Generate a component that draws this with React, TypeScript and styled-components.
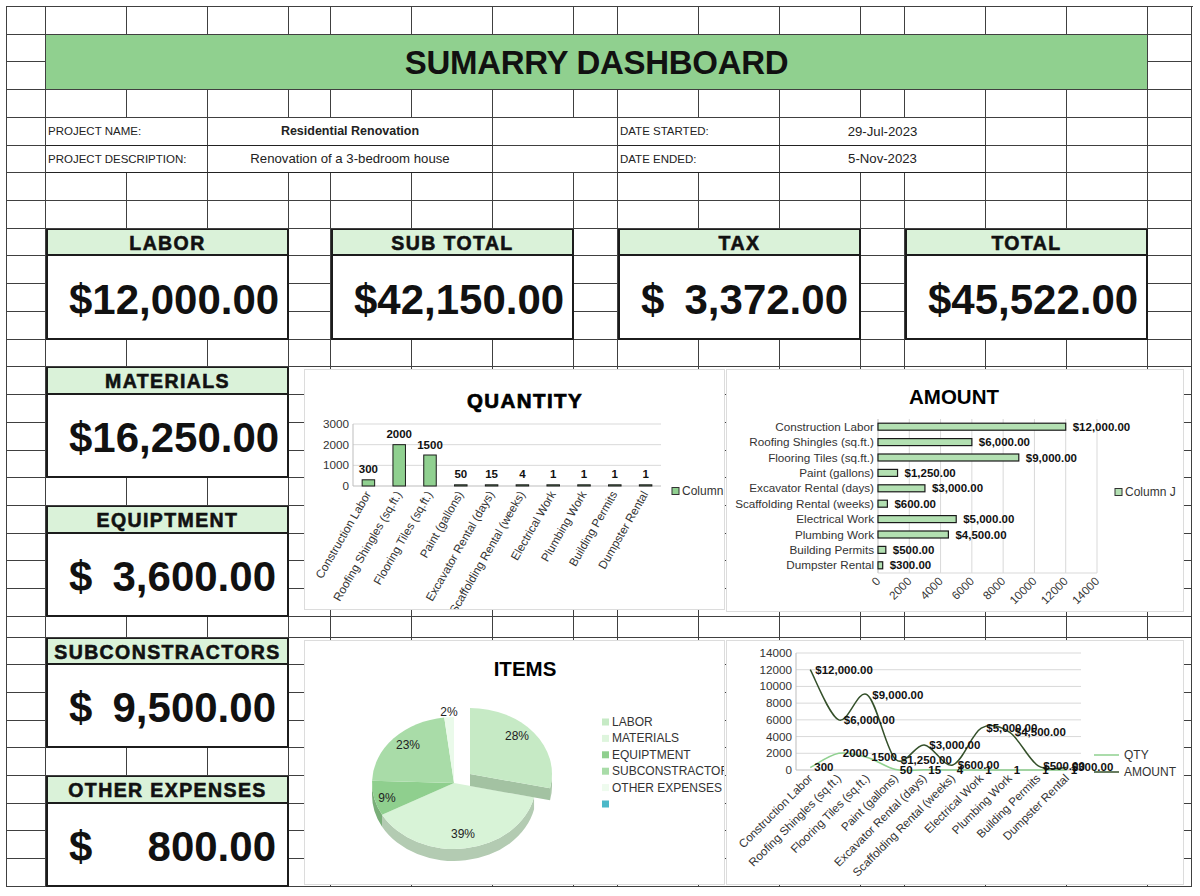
import React from 'react';
import styled, { createGlobalStyle } from 'styled-components';

const GlobalStyle = createGlobalStyle`
  html, body { margin: 0; padding: 0; background: #ffffff; }
  body { font-family: "Liberation Sans", Arial, sans-serif; color: #111; }
  * { box-sizing: border-box; }
`;

const COLS = [39, 81, 81, 81, 42, 81, 81, 81, 44, 81, 81, 81, 44, 81, 81, 81, 44];
const ROWS: number[] = [...Array(22).fill(27.73), 21, ...Array(9).fill(27.67)];
const LINE = '#404040';

const Page = styled.div`
  padding: 6px;
  width: 1200px;
`;

const Sheet = styled.div`
  position: relative;
  display: grid;
  grid-template-columns: ${COLS.map((c) => `${c}px`).join(' ')};
  grid-template-rows: ${ROWS.map((r) => `${r}px`).join(' ')};
  width: 1187px;
  border-top: 1px solid ${LINE};
  border-left: 1px solid ${LINE};
`;

type Pos = { $c: number; $r: number; $cs?: number; $rs?: number };

const GridCell = styled.div<Pos>`
  grid-column: ${(p) => p.$c + 1} / span ${(p) => p.$cs ?? 1};
  grid-row: ${(p) => p.$r + 1} / span ${(p) => p.$rs ?? 1};
  border-right: 1px solid ${LINE};
  border-bottom: 1px solid ${LINE};
  min-width: 0;
  overflow: hidden;
`;

const EmptyCell = styled(GridCell)``;

const TitleCell = styled(GridCell)`
  background: #90d08f;
  display: flex;
  align-items: center;
  justify-content: center;
  font-size: 33px;
  font-weight: 700;
  letter-spacing: -0.3px;
  color: #111;
  padding-top: 2px;
`;

const InfoLabel = styled(GridCell)`
  display: flex;
  align-items: center;
  padding-left: 2px;
  font-size: 11.5px;
  color: #222;
  white-space: nowrap;
  border-bottom-color: #222;
`;

const InfoValue = styled(GridCell)<{ $bold?: boolean }>`
  display: flex;
  align-items: center;
  justify-content: center;
  font-size: ${(p) => (p.$bold ? '12.5px' : '13.2px')};
  font-weight: ${(p) => (p.$bold ? 700 : 400)};
  color: #222;
  white-space: nowrap;
  border-bottom-color: #222;
`;

const CardHeader = styled(GridCell)`
  background: #daf2d9;
  display: flex;
  align-items: center;
  justify-content: center;
  border: 2px solid #1c1c1c;
  border-top-width: 1px;
  padding-top: 2px;
  font-size: 19.5px;
  font-weight: 700;
  letter-spacing: 1.4px;
  -webkit-text-stroke: 0.6px #111;
  color: #111;
  white-space: nowrap;
`;

const CardValue = styled(GridCell)`
  display: flex;
  align-items: center;
  justify-content: space-between;
  padding: 5px 11px 0 21px;
  border: 2px solid #1c1c1c;
  border-top: 0;
  background: #fff;
  font-size: 42px;
  font-weight: 700;
  color: #111;
  white-space: nowrap;
`;

const ChartFrame = styled.div<{ $x: number; $y: number; $w: number; $h: number }>`
  position: absolute;
  left: ${(p) => p.$x}px;
  top: ${(p) => p.$y}px;
  width: ${(p) => p.$w}px;
  height: ${(p) => p.$h}px;
  background: #fff;
  border: 1px solid #dcdcdc;
  overflow: hidden;
  z-index: 2;
  svg { display: block; font-family: "Liberation Sans", Arial, sans-serif; }
`;

const CATS = [
  'Construction Labor',
  'Roofing Shingles (sq.ft.)',
  'Flooring Tiles (sq.ft.)',
  'Paint (gallons)',
  'Excavator Rental (days)',
  'Scaffolding Rental (weeks)',
  'Electrical Work',
  'Plumbing Work',
  'Building Permits',
  'Dumpster Rental',
];
const QTY = [300, 2000, 1500, 50, 15, 4, 1, 1, 1, 1];
const AMT = [12000, 6000, 9000, 1250, 3000, 600, 5000, 4500, 500, 300];
const money = (v: number) => '$' + v.toLocaleString('en-US', { minimumFractionDigits: 2 });

const AXIS = '#bdbdbd';
const GRID = '#d9d9d9';
const LBL = '#333';

function QuantityChart() {
  const x0 = 48;
  const slot = 30.8;
  const base = 116;
  const top = 54;
  const h = base - top;
  return (
    <svg width={421} height={241} viewBox="0 0 421 241">
      <text x={220} y={38} textAnchor="middle" fontSize={20.5} fontWeight={700} letterSpacing={1.4} stroke="#000" strokeWidth={0.7} fill="#000">
        QUANTITY
      </text>
      {[1000, 2000, 3000].map((v) => {
        const y = base - (v / 3000) * h;
        return <line key={v} x1={x0} x2={x0 + slot * 10} y1={y} y2={y} stroke={GRID} strokeWidth={1} />;
      })}
      <line x1={x0} x2={x0 + slot * 10} y1={base} y2={base} stroke={AXIS} />
      <line x1={x0} x2={x0} y1={top} y2={base} stroke={AXIS} />
      {[0, 1000, 2000, 3000].map((v) => (
        <text key={v} x={44} y={base - (v / 3000) * h + 4} textAnchor="end" fontSize={11.7} fill={LBL}>
          {v}
        </text>
      ))}
      {QTY.map((v, i) => {
        const cx = x0 + slot * (i + 0.5);
        const bh = Math.max(1.2, (v / 3000) * h);
        return (
          <g key={i}>
            <rect x={cx - 6.25} y={base - bh} width={12.5} height={bh} fill="#90d090" stroke="#1a1a1a" strokeWidth={1} />
            <text x={cx} y={base - bh - 6.5} textAnchor="middle" fontSize={11.5} fontWeight={700} fill="#111">
              {v}
            </text>
            <text transform={`translate(${cx + 3},${base + 8}) rotate(-60)`} textAnchor="end" fontSize={11.7} fill={LBL}>
              {CATS[i]}
            </text>
          </g>
        );
      })}
      <rect x={367} y={117.5} width={7} height={7} fill="#90d090" stroke="#333" strokeWidth={1} />
      <text x={377} y={125} fontSize={12} fill={LBL}>
        Column
      </text>
    </svg>
  );
}

function AmountChart() {
  const x0 = 151;
  const w = 219;
  const top = 49;
  const rowH = 15.4;
  const bottom = top + rowH * 10;
  const sx = (v: number) => (v / 14000) * w;
  return (
    <svg width={458} height={243} viewBox="0 0 458 243">
      <text x={227} y={34} textAnchor="middle" fontSize={20.5} fontWeight={700} fill="#000">
        AMOUNT
      </text>
      {Array.from({ length: 8 }, (_, k) => {
        const x = x0 + (k * w) / 7;
        return <line key={k} x1={x} x2={x} y1={top} y2={bottom} stroke={k === 0 ? AXIS : GRID} />;
      })}
      <line x1={x0} x2={x0 + w} y1={bottom} y2={bottom} stroke={GRID} />
      {AMT.map((v, i) => {
        const yc = top + rowH * (i + 0.5);
        const bw = Math.max(3, sx(v));
        return (
          <g key={i}>
            <rect x={x0} y={yc - 3.5} width={bw} height={7} fill="#b3e0b2" stroke="#1a1a1a" strokeWidth={1.2} />
            <text x={147} y={yc + 4} textAnchor="end" fontSize={11.7} fill={LBL}>
              {CATS[i]}
            </text>
            <text x={x0 + bw + 7} y={yc + 4} fontSize={11.5} fontWeight={700} fill="#111">
              {money(v)}
            </text>
          </g>
        );
      })}
      {Array.from({ length: 8 }, (_, k) => {
        const x = x0 + (k * w) / 7;
        return (
          <text key={k} transform={`translate(${x + 3},${bottom + 9}) rotate(-45)`} textAnchor="end" fontSize={11.7} fill={LBL}>
            {k * 2000}
          </text>
        );
      })}
      <rect x={388} y={118.5} width={7} height={7} fill="#b3e0b2" stroke="#333" strokeWidth={1} />
      <text x={398} y={126} fontSize={12} fill={LBL}>
        Column J
      </text>
    </svg>
  );
}

const RX = 82;
const RY = 66;
const DEPTH = 12;

function pt(cx: number, cy: number, deg: number): [number, number] {
  const r = (deg * Math.PI) / 180;
  return [cx + RX * Math.sin(r), cy - RY * Math.cos(r)];
}

function slicePath(cx: number, cy: number, a1: number, a2: number) {
  const [x1, y1] = pt(cx, cy, a1);
  const [x2, y2] = pt(cx, cy, a2);
  const large = a2 - a1 > 180 ? 1 : 0;
  return `M${cx},${cy} L${x1},${y1} A${RX},${RY} 0 ${large} 1 ${x2},${y2} Z`;
}

function sidePath(cx: number, cy: number, a1: number, a2: number) {
  const s = Math.max(a1, 90);
  const e = Math.min(a2, 270);
  if (s >= e) return '';
  const [x1, y1] = pt(cx, cy, s);
  const [x2, y2] = pt(cx, cy, e);
  const large = e - s > 180 ? 1 : 0;
  return `M${x1},${y1} A${RX},${RY} 0 ${large} 1 ${x2},${y2} L${x2},${y2 + DEPTH} A${RX},${RY} 0 ${large} 0 ${x1},${y1 + DEPTH} Z`;
}

const PIE = [
  { name: 'LABOR', value: 12000, top: '#c6eac5', side: '#a9c6a8', legend: '#c6eac5' },
  { name: 'MATERIALS', value: 16250, top: '#d8f3d7', side: '#b3cbb2', legend: '#def5dd' },
  { name: 'EQUIPTMENT', value: 3600, top: '#8fcf8e', side: '#79ae78', legend: '#8fcf8e' },
  { name: 'SUBCONSTRACTOR', value: 9500, top: '#a9dca8', side: '#8fbb8e', legend: '#a9dca8' },
  { name: 'OTHER EXPENSES', value: 800, top: '#eafaea', side: '#c8dcc8', legend: '#eefbee' },
];

function ItemsChart() {
  const total = PIE.reduce((s, p) => s + p.value, 0);
  let acc = 0;
  const slices = PIE.map((p) => {
    const a1 = (acc / total) * 360;
    acc += p.value;
    const a2 = (acc / total) * 360;
    return { ...p, a1, a2 };
  });
  const mc: [number, number] = [149, 142];
  const ec: [number, number] = [165, 133];
  const labor = slices[0];
  const rest = slices.slice(1);
  const [lx, ly] = pt(ec[0], ec[1], labor.a2);
  const labels = [
    { t: '2%', x: 144, y: 75 },
    { t: '28%', x: 212, y: 99 },
    { t: '23%', x: 103, y: 108 },
    { t: '9%', x: 82, y: 161 },
    { t: '39%', x: 158, y: 197 },
  ];
  return (
    <svg width={421} height={245} viewBox="0 0 421 245">
      <text x={220} y={35} textAnchor="middle" fontSize={20.5} fontWeight={700} fill="#000">
        ITEMS
      </text>
      {rest.map((s) => {
        const d = sidePath(mc[0], mc[1], s.a1, s.a2);
        return d ? <path key={`s${s.name}`} d={d} fill={s.side} /> : null;
      })}
      {rest.map((s) => (
        <path key={`t${s.name}`} d={slicePath(mc[0], mc[1], s.a1, s.a2)} fill={s.top} />
      ))}
      <path d={`M${ec[0]},${ec[1]} L${lx},${ly} L${lx},${ly + DEPTH} L${ec[0]},${ec[1] + DEPTH} Z`} fill="#a3c2a2" />
      <path d={sidePath(ec[0], ec[1], labor.a1, labor.a2)} fill={labor.side} />
      <path d={slicePath(ec[0], ec[1], labor.a1, labor.a2)} fill={labor.top} />
      {labels.map((l) => (
        <text key={l.t} x={l.x} y={l.y} textAnchor="middle" fontSize={12} fill="#222">
          {l.t}
        </text>
      ))}
      {PIE.map((p, i) => (
        <g key={p.name}>
          <rect x={297} y={77.5 + i * 16.4} width={7} height={7} fill={p.legend} />
          <text x={307} y={85 + i * 16.4} fontSize={12} fill={LBL}>
            {p.name}
          </text>
        </g>
      ))}
      <rect x={297} y={77.5 + 5 * 16.4} width={7} height={7} fill="#4bb8c8" />
    </svg>
  );
}

function smooth(pts: [number, number][]) {
  let d = `M${pts[0][0]},${pts[0][1]}`;
  for (let i = 0; i < pts.length - 1; i++) {
    const p0 = pts[i - 1] || pts[i];
    const p1 = pts[i];
    const p2 = pts[i + 1];
    const p3 = pts[i + 2] || p2;
    const c1x = p1[0] + (p2[0] - p0[0]) / 6;
    const c1y = p1[1] + (p2[1] - p0[1]) / 6;
    const c2x = p2[0] - (p3[0] - p1[0]) / 6;
    const c2y = p2[1] - (p3[1] - p1[1]) / 6;
    d += ` C${c1x},${c1y} ${c2x},${c2y} ${p2[0]},${p2[1]}`;
  }
  return d;
}

function LineChart() {
  const x0 = 69;
  const slot = 28.5;
  const base = 129;
  const ph = 117;
  const sy = (v: number) => base - (v / 14000) * ph;
  const px = (i: number) => x0 + slot * (i + 0.5);
  const amtPts = AMT.map((v, i) => [px(i), sy(v)] as [number, number]);
  const qtyPts = QTY.map((v, i) => [px(i), sy(v)] as [number, number]);
  const ticks = Array.from({ length: 8 }, (_, k) => k * 2000);
  return (
    <svg width={458} height={245} viewBox="0 0 458 245">
      {ticks.map((v) => (
        <g key={v}>
          <line x1={x0} x2={x0 + slot * 10} y1={sy(v)} y2={sy(v)} stroke={v === 0 ? AXIS : GRID} />
          <text x={65} y={sy(v) + 4} textAnchor="end" fontSize={11.7} fill={LBL}>
            {v}
          </text>
        </g>
      ))}
      <line x1={x0} x2={x0} y1={sy(14000)} y2={base} stroke={AXIS} />
      <path d={smooth(qtyPts)} fill="none" stroke="#8fd08f" strokeWidth={1.5} />
      <path d={smooth(amtPts)} fill="none" stroke="#34502a" strokeWidth={1.5} />
      {QTY.map((v, i) => (
        <text key={`q${i}`} x={px(i) + 4} y={sy(v) + 4} fontSize={11.5} fontWeight={700} fill="#111">
          {v}
        </text>
      ))}
      {AMT.map((v, i) => (
        <text key={`a${i}`} x={px(i) + 5} y={sy(v) + 4} fontSize={11.5} fontWeight={700} fill="#111">
          {money(v)}
        </text>
      ))}
      {CATS.map((c, i) => (
        <text key={c} transform={`translate(${px(i) + 3},${base + 9}) rotate(-45)`} textAnchor="end" fontSize={11.7} fill={LBL}>
          {c}
        </text>
      ))}
      <line x1={367} x2={392} y1={114} y2={114} stroke="#8fd08f" strokeWidth={1.5} />
      <text x={397} y={118} fontSize={12} fill={LBL}>
        QTY
      </text>
      <line x1={367} x2={392} y1={131} y2={131} stroke="#34502a" strokeWidth={1.5} />
      <text x={397} y={135} fontSize={12} fill={LBL}>
        AMOUNT
      </text>
    </svg>
  );
}

type Card = { label: string; value: string; c: number; r: number };

const CARDS: Card[] = [
  { label: 'LABOR', value: '12,000.00', c: 1, r: 8 },
  { label: 'SUB TOTAL', value: '42,150.00', c: 5, r: 8 },
  { label: 'TAX', value: '3,372.00', c: 9, r: 8 },
  { label: 'TOTAL', value: '45,522.00', c: 13, r: 8 },
  { label: 'MATERIALS', value: '16,250.00', c: 1, r: 13 },
  { label: 'EQUIPTMENT', value: '3,600.00', c: 1, r: 18 },
  { label: 'SUBCONSTRACTORS', value: '9,500.00', c: 1, r: 23 },
  { label: 'OTHER EXPENSES', value: '800.00', c: 1, r: 28 },
];

type Info = { kind: 'label' | 'value' | 'blank'; text?: string; bold?: boolean; c: number; r: number; cs: number };

const INFO: Info[] = [
  { kind: 'label', text: 'PROJECT NAME:', c: 1, r: 4, cs: 2 },
  { kind: 'value', text: 'Residential Renovation', bold: true, c: 3, r: 4, cs: 4 },
  { kind: 'blank', c: 7, r: 4, cs: 2 },
  { kind: 'label', text: 'DATE STARTED:', c: 9, r: 4, cs: 2 },
  { kind: 'value', text: '29-Jul-2023', c: 11, r: 4, cs: 3 },
  { kind: 'label', text: 'PROJECT DESCRIPTION:', c: 1, r: 5, cs: 2 },
  { kind: 'value', text: 'Renovation of a 3-bedroom house', c: 3, r: 5, cs: 4 },
  { kind: 'blank', c: 7, r: 5, cs: 2 },
  { kind: 'label', text: 'DATE ENDED:', c: 9, r: 5, cs: 2 },
  { kind: 'value', text: '5-Nov-2023', c: 11, r: 5, cs: 3 },
];

function buildEmpty() {
  const used = new Set<string>();
  const mark = (c: number, r: number, cs: number, rs: number) => {
    for (let i = 0; i < cs; i++) for (let j = 0; j < rs; j++) used.add(`${c + i}:${r + j}`);
  };
  mark(1, 1, 15, 2);
  INFO.forEach((i) => mark(i.c, i.r, i.cs, 1));
  CARDS.forEach((k) => mark(k.c, k.r, 3, 4));
  const cells: { c: number; r: number }[] = [];
  for (let r = 0; r < ROWS.length; r++)
    for (let c = 0; c < COLS.length; c++) if (!used.has(`${c}:${r}`)) cells.push({ c, r });
  return cells;
}

const EMPTY = buildEmpty();

export default function App() {
  return (
    <Page>
      <GlobalStyle />
      <Sheet>
        {EMPTY.map((e) => (
          <EmptyCell key={`${e.c}:${e.r}`} $c={e.c} $r={e.r} />
        ))}
        <TitleCell $c={1} $r={1} $cs={15} $rs={2}>
          SUMARRY DASHBOARD
        </TitleCell>
        {INFO.map((i) =>
          i.kind === 'label' ? (
            <InfoLabel key={`${i.c}:${i.r}`} $c={i.c} $r={i.r} $cs={i.cs}>
              {i.text}
            </InfoLabel>
          ) : i.kind === 'value' ? (
            <InfoValue key={`${i.c}:${i.r}`} $c={i.c} $r={i.r} $cs={i.cs} $bold={i.bold}>
              {i.text}
            </InfoValue>
          ) : (
            <EmptyCell key={`${i.c}:${i.r}`} $c={i.c} $r={i.r} $cs={i.cs} />
          )
        )}
        {CARDS.map((k) => (
          <React.Fragment key={k.label}>
            <CardHeader $c={k.c} $r={k.r} $cs={3}>
              {k.label}
            </CardHeader>
            <CardValue $c={k.c} $r={k.r + 1} $cs={3} $rs={3}>
              <span>$</span>
              <span>{k.value}</span>
            </CardValue>
          </React.Fragment>
        ))}
        <ChartFrame $x={297} $y={362} $w={421} $h={241}>
          <QuantityChart />
        </ChartFrame>
        <ChartFrame $x={719} $y={362} $w={458} $h={243}>
          <AmountChart />
        </ChartFrame>
        <ChartFrame $x={297} $y={633} $w={421} $h={245}>
          <ItemsChart />
        </ChartFrame>
        <ChartFrame $x={719} $y={633} $w={458} $h={245}>
          <LineChart />
        </ChartFrame>
      </Sheet>
    </Page>
  );
}
